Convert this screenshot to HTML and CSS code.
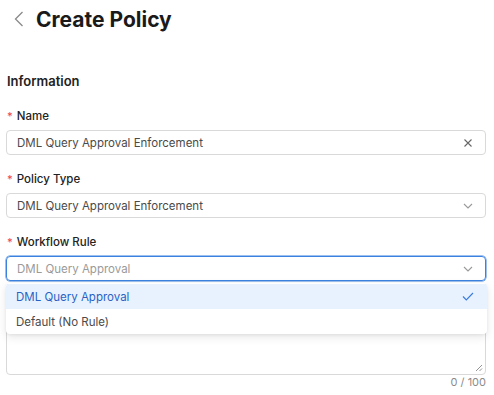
FILE: index.html
```html
<!DOCTYPE html>
<html>
<head>
<meta charset="utf-8">
<link rel="stylesheet" href="styles.css">
</head>
<body>
<div class="page">
  <div class="header">
    <svg class="back" width="10" height="16" viewBox="0 0 10 16"><path d="M8.5 1 L1.5 8 L8.5 15" fill="none" stroke="#8a8a8a" stroke-width="1.3"/></svg>
    <h1 class="title">Create Policy</h1>
  </div>
  <h2 class="section">Information</h2>
  <div class="form">
    <div class="field">
      <label class="label"><span class="req">*</span>Name</label>
      <div class="input">
        <span class="value">DML Query Approval Enforcement</span>
        <svg class="icon" width="10" height="10" viewBox="0 0 10 10"><path d="M1.5 1.5 L8.5 8.5 M8.5 1.5 L1.5 8.5" stroke="#666" stroke-width="1.1" fill="none"/></svg>
      </div>
    </div>
    <div class="field">
      <label class="label"><span class="req">*</span>Policy Type</label>
      <div class="input">
        <span class="value">DML Query Approval Enforcement</span>
        <svg class="icon" width="10" height="6" viewBox="0 0 10 6"><path d="M1 1 L5 5 L9 1" stroke="#999" stroke-width="1.1" fill="none"/></svg>
      </div>
    </div>
    <div class="field workflow">
      <label class="label"><span class="req">*</span>Workflow Rule</label>
      <div class="input focus">
        <span class="value placeholder">DML Query Approval</span>
        <svg class="icon" width="10" height="6" viewBox="0 0 10 6"><path d="M1 1 L5 5 L9 1" stroke="#999" stroke-width="1.1" fill="none"/></svg>
      </div>
      <div class="dropdown">
        <div class="option selected">
          <span>DML Query Approval</span>
          <svg width="12" height="9" viewBox="0 0 12 9"><path d="M1 4.5 L4.3 7.8 L11 1" stroke="#3b7ddd" stroke-width="1.2" fill="none"/></svg>
        </div>
        <div class="option"><span>Default (No Rule)</span></div>
      </div>
    </div>
    <div class="field">
      <div class="label spacer"></div>
      <div class="textarea">
        <svg class="grip" width="8" height="8" viewBox="0 0 8 8"><path d="M7 1 L1 7 M7 4.5 L4.5 7" stroke="#888" stroke-width="0.9" fill="none"/></svg>
      </div>
      <div class="count">0 / 100</div>
    </div>
  </div>
</div>
</body>
</html>
```
FILE: styles.css
```css
* { box-sizing: border-box; }
html, body { margin: 0; padding: 0; background: #fff; }
body {
  font-family: Inter, "Noto Sans", "Liberation Sans", sans-serif;
  color: #1f1f1f;
  width: 494px;
  height: 395px;
  overflow: hidden;
}
.page { padding: 0 8px 0 6px; }
.header {
  height: 38px;
  display: flex;
  align-items: center;
  gap: 12px;
  padding-left: 8px;
}
.back { flex: none; }
.title {
  margin: 0;
  font-size: 21px;
  font-weight: 700;
  letter-spacing: 0;
  color: #1a1a1a;
}
.section {
  margin: 34px 0 0 1px;
  font-size: 13px;
  font-weight: 600;
  line-height: 18px;
  color: #222;
}
.form {
  display: flex;
  flex-direction: column;
  gap: 16px;
  margin-top: 18px;
}
.field { display: flex; flex-direction: column; position: relative; }
.label {
  font-size: 11.5px;
  font-weight: 500;
  line-height: 16px;
  color: #222;
  margin-left: 1px;
  margin-bottom: 6px;
}
.spacer { height: 16px; }
.req { color: #f04a3c; margin-right: 4px; font-size: 11px; }
.input {
  height: 25px;
  border: 1px solid #d9d9d9;
  border-radius: 4px;
  display: flex;
  align-items: center;
  justify-content: space-between;
  padding: 0 12px 0 10px;
  font-size: 11.5px;
  color: #4a4a4a;
}
.input.focus { border-color: #3b82e0; box-shadow: 0 0 0 0.5px #3b82e0; }
.placeholder { color: #9a9a9a; }
.dropdown {
  position: absolute;
  top: 49px;
  left: 0;
  width: 481px;
  background: #fff;
  border-radius: 4px;
  box-shadow: 0 3px 10px rgba(0,0,0,0.10), 0 1px 3px rgba(0,0,0,0.06);
  overflow: hidden;
  z-index: 2;
}
.option {
  height: 25px;
  display: flex;
  align-items: center;
  justify-content: space-between;
  padding: 0 13px 0 10px;
  font-size: 11.5px;
  color: #4a4a4a;
}
.option.selected { background: #e8f2fe; color: #2a62c4; margin-top: 1px; }
.textarea {
  height: 56px;
  border: 1px solid #d9d9d9;
  border-radius: 4px;
  position: relative;
}
.grip { position: absolute; right: 2px; bottom: 2px; }
.count {
  text-align: right;
  font-size: 11px;
  line-height: 13px;
  color: #8a8a8a;
  margin-top: 1px;
}
```
